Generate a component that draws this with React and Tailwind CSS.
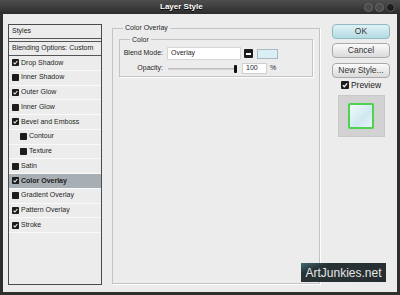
import React from "react";

const font = { fontFamily: '"Liberation Sans", Arial, sans-serif' };

function Check({ on, size = 7 }) {
  return (
    <svg width={size} height={size} viewBox="0 0 7 7" className="shrink-0">
      <rect x="0" y="0" width="7" height="7" rx="0.8" fill="#1c1c1c" />
      {on && (
        <path d="M1.6 3.7 L2.9 5 L5.4 2" fill="none" stroke="#f4f4f4" strokeWidth="1.1" />
      )}
    </svg>
  );
}

const effects = [
  { name: "Drop Shadow", on: true },
  { name: "Inner Shadow", on: false },
  { name: "Outer Glow", on: true },
  { name: "Inner Glow", on: false },
  { name: "Bevel and Emboss", on: true },
  { name: "Contour", on: false, sub: true },
  { name: "Texture", on: false, sub: true },
  { name: "Satin", on: false },
  { name: "Color Overlay", on: true, active: true },
  { name: "Gradient Overlay", on: false },
  { name: "Pattern Overlay", on: true },
  { name: "Stroke", on: true },
];

function StyleList() {
  return (
    <div className="w-[94px] h-[261px] border border-[#4b4b4b] bg-[#ececec] flex flex-col text-[7px] text-[#1e1e1e]">
      <div className="h-[14px] flex items-center pl-[3px] border-b border-[#555]">Styles</div>
      <div className="h-[2px]" />
      <div className="h-[15px] flex items-center pl-[3px] border-y border-[#555]">Blending Options: Custom</div>
      {effects.map((e) => (
        <div
          key={e.name}
          className={
            "h-[14.75px] flex items-center gap-[2px] border-b border-[#fafafa] " +
            (e.sub ? "pl-[11px] " : "pl-[3px] ") +
            (e.active ? "bg-[#a8afb4] font-bold" : "")
          }
        >
          <Check on={e.on} />
          <span>{e.name}</span>
        </div>
      ))}
    </div>
  );
}

function Button({ children, primary }) {
  return (
    <div
      className={
        "h-[15px] w-[58px] rounded-[4px] border flex items-center justify-center text-[8.5px] text-[#333] " +
        (primary
          ? "border-[#8fb9c1] bg-[linear-gradient(#dff2f5,#b4dbe3)]"
          : "border-[#a9a9a9] bg-[linear-gradient(#fbfbfb,#dadada)]")
      }
    >
      {children}
    </div>
  );
}

export default function App() {
  return (
    <div className="relative w-[400px] h-[295px] bg-[#2f2f2f] flex flex-col overflow-hidden" style={font}>
      {/* title bar */}
      <div className="h-[14px] flex items-center bg-[linear-gradient(#4e4e4e,#2c2c2c)]">
        <span className="ml-[160px] text-[8px] font-bold text-white [text-shadow:0_1px_1px_#000]">Layer Style</span>
        <div className="ml-auto mr-[5px] flex gap-[2px]">
          <span className="w-[9px] h-[9px] rounded-full bg-[#4a4a4a] border border-[#6a6a6a]" />
          <span className="w-[9px] h-[9px] rounded-full bg-[#4a4a4a] border border-[#6a6a6a]" />
          <span className="w-[9px] h-[9px] rounded-full bg-[#1c1c1c] border border-[#5a5a5a]" />
        </div>
      </div>

      {/* body */}
      <div className="mx-[3px] mb-[3px] flex-1 bg-[#ececec] flex pl-[5px] pt-[10px]">
        <StyleList />

        {/* settings */}
        <fieldset className="ml-[10px] mt-[-1px] w-[208px] h-[261px] border border-[#c3c3c3] shadow-[1px_1px_0_#fff] text-[7px] text-[#1e1e1e]">
          <legend className="ml-[10px] px-[2px]">Color Overlay</legend>
          <fieldset className="mx-[6px] mt-[1px] h-[42px] border border-[#c3c3c3] shadow-[1px_1px_0_#fff]">
            <legend className="ml-[10px] px-[2px]">Color</legend>
            <div className="flex items-center mt-[2px]">
              <span className="w-[43px] text-right">Blend Mode:</span>
              <div className="ml-[4px] w-[74px] h-[13px] bg-white border border-[#d6d6d6] flex items-center pl-[3px]">
                Overlay
              </div>
              <div className="ml-[3px] w-[9px] h-[9px] bg-[#1c1c1c] rounded-[1px] flex items-center justify-center">
                <span className="w-[5px] h-[2px] bg-white" />
              </div>
              <div className="ml-[4px] w-[21px] h-[10px] bg-[#d8eff6] border border-[#a9b9bd]" />
            </div>
            <div className="flex items-center mt-[3px]">
              <span className="w-[43px] text-right">Opacity:</span>
              <div className="ml-[5px] w-[66px] h-[2px] bg-[#d4d4d4] border-t border-[#bdbdbd]" />
              <div className="w-[3px] h-[8px] rounded-[1px] bg-[#111]" />
              <div className="ml-[5px] w-[25px] h-[11px] bg-white border border-[#cfcfcf] flex items-center pl-[3px]">100</div>
              <span className="ml-[3px]">%</span>
            </div>
          </fieldset>
        </fieldset>

        {/* buttons */}
        <div className="ml-[12px] w-[58px] flex flex-col items-center">
          <Button primary>OK</Button>
          <div className="h-[4px]" />
          <Button>Cancel</Button>
          <div className="h-[5px]" />
          <Button>New Style...</Button>
          <div className="mt-[1px] flex items-center gap-[2px] text-[8.5px] text-[#222]">
            <Check on size={8} />
            <span>Preview</span>
          </div>
          <div className="mt-[3px] w-[47px] h-[42px] bg-[#d2d2d2] border border-[#c8c8c8] flex items-center justify-center">
            <div className="w-[26px] h-[26px] rounded-[2px] border-[2px] border-[#4fd24f] bg-[linear-gradient(135deg,#f4fafc,#cfe8f0_60%,#e9f5f8)]" />
          </div>
        </div>
      </div>

      {/* watermark */}
      <div className="absolute left-[301px] top-[263px] w-[85px] h-[19px] bg-[linear-gradient(160deg,#3f6b70_0%,#283235_22%,#262d30_100%)] flex items-center justify-center text-[12px] text-[#e6e6e6]">
        ArtJunkies.net
      </div>
    </div>
  );
}
